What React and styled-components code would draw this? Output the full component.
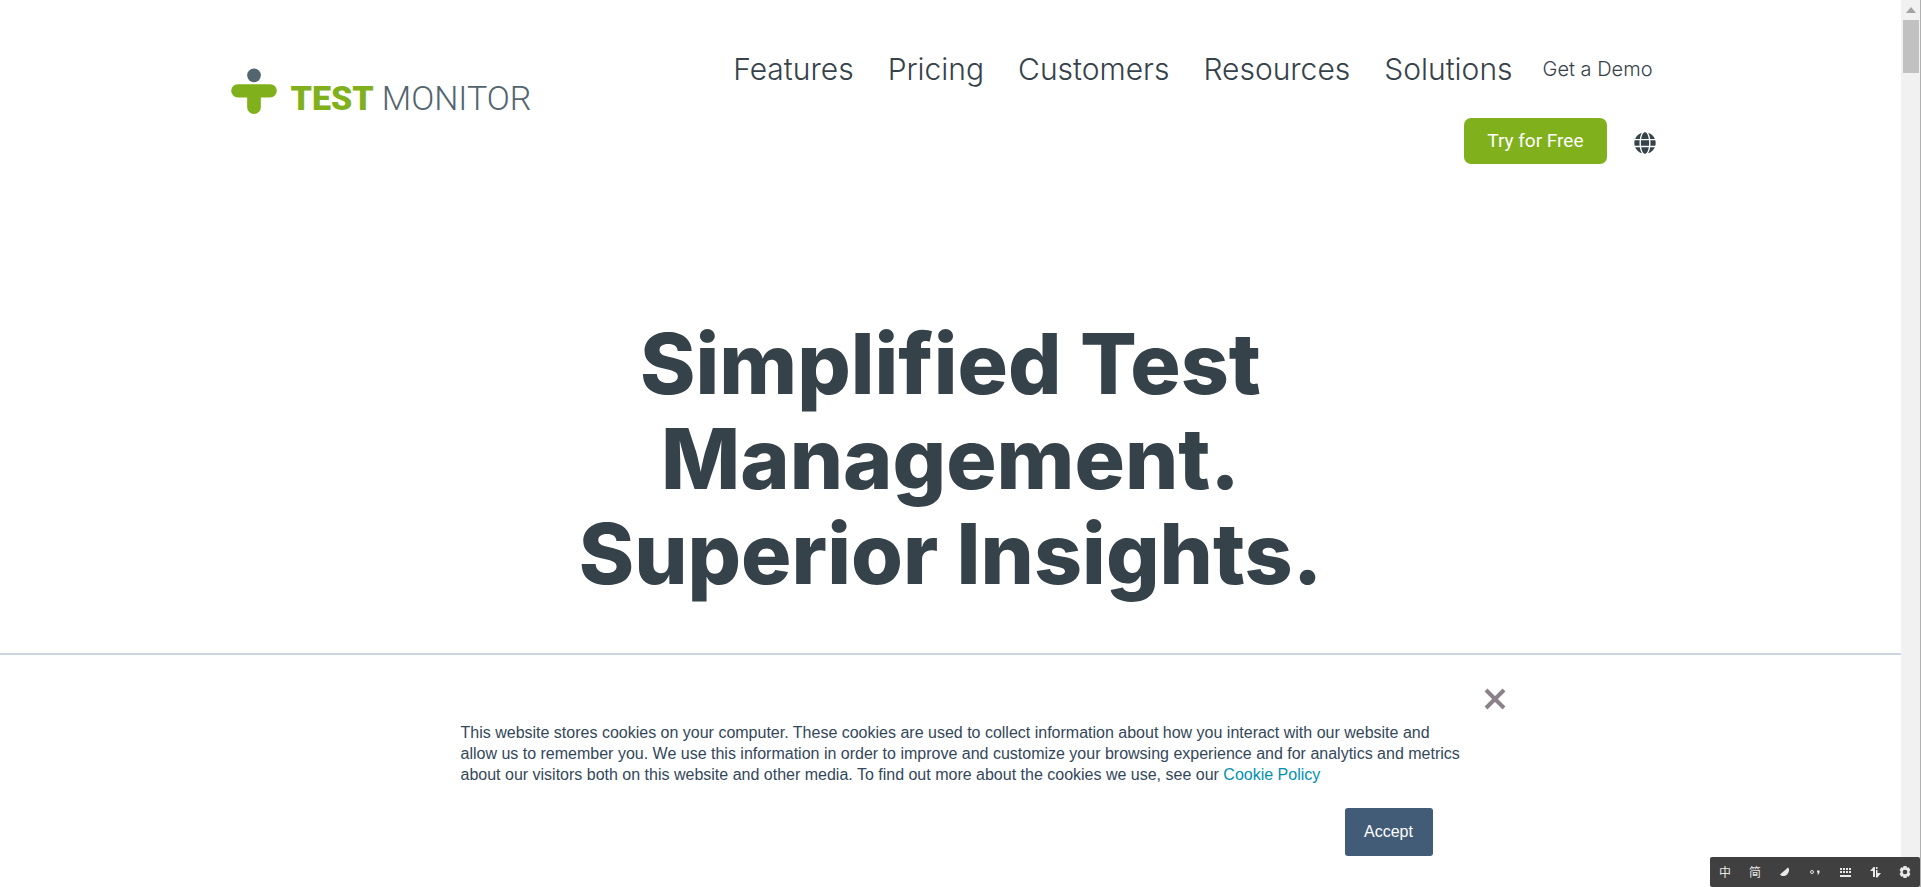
import React from "react";
import styled, { createGlobalStyle } from "styled-components";

const Global = createGlobalStyle`
  *, *::before, *::after { box-sizing: border-box; }
  html, body { margin: 0; background: #fff; }
  body { font-family: Inter, sans-serif; color: #36424a; }
`;

const Frame = styled.div`
  display: grid;
  grid-template-columns: minmax(0, 1fr) 20px;
  min-height: 100vh;
`;

const Page = styled.div`
  display: flex;
  flex-direction: column;
`;

const Header = styled.header`
  display: flex;
  justify-content: space-between;
  width: 100%;
  max-width: 1440px;
  margin: 0 auto;
  padding: 49px 15px 0 0;
`;

const Logo = styled.a`
  display: flex;
  align-items: center;
  gap: 14px;
  height: 48px;
  margin-top: 18px;
  text-decoration: none;
`;

const Wordmark = styled.span`
  display: flex;
  gap: 8px;
  padding-top: 14px;
  font-family: Roboto, sans-serif;
  font-size: 34px;
  line-height: 36px;
  font-weight: 300;
  color: #53656f;
`;

const WordStrong = styled.strong`
  font-weight: 900;
  color: #80b11c;
`;

const Menu = styled.nav`
  display: flex;
  flex-direction: column;
  align-items: flex-end;
  gap: 29px;
`;

const MenuRow = styled.div`
  display: flex;
  align-items: center;
  gap: ${(p) => p.$gap}px;
`;

const MenuLink = styled.a`
  font-size: ${(p) => (p.$small ? 20 : 30)}px;
  padding-right: ${(p) => (p.$small ? 3 : 0)}px;
  line-height: 40px;
  font-weight: 300;
  color: #36424a;
  text-decoration: none;
  white-space: nowrap;
`;

const TrialButton = styled.button`
  height: 46px;
  padding: 0 23px;
  border: 0;
  border-radius: 7px;
  background: #80b11c;
  color: #fff;
  font: 400 19px/46px Roboto, sans-serif;
`;

const LanguageButton = styled.button`
  display: flex;
  padding: 3px 0 0;
  border: 0;
  background: none;
`;

const Hero = styled.main`
  flex: 1;
  padding: 152px 24px 40px;
`;

const Title = styled.h1`
  margin: 0;
  font-size: 84px;
  line-height: 95px;
  font-weight: 800;
  text-align: center;
`;

const Banner = styled.section`
  min-height: 234px;
  padding: 31px 0 24px;
  border-top: 2px solid #cbd6e2;
  background: #fff;
  font-family: "Liberation Sans", Arial, sans-serif;
`;

const BannerInner = styled.div`
  display: flex;
  flex-direction: column;
  align-items: flex-end;
  max-width: 1114px;
  margin: 0 auto;
  padding-left: 67px;
`;

const CloseButton = styled.button`
  display: flex;
  justify-content: center;
  align-items: center;
  width: 26px;
  height: 26px;
  padding: 0;
  border: 0;
  background: none;
`;

const Notice = styled.p`
  align-self: flex-start;
  max-width: 1004px;
  margin: 10px 0 23px;
  font-size: 16px;
  line-height: 21px;
  color: #33475b;
`;

const PolicyLink = styled.a`
  color: #0091ae;
  text-decoration: none;
`;

const AcceptButton = styled.button`
  width: 88px;
  height: 48px;
  margin-right: 75px;
  border: 0;
  border-radius: 3px;
  background: #425b76;
  color: #fff;
  font: 16px "Liberation Sans", Arial, sans-serif;
`;

const Track = styled.div`
  display: flex;
  flex-direction: column;
  align-items: center;
  background: #f1f1f1;
  border-right: 1px solid #b0b0b0;
`;

const Arrow = styled.svg`
  display: block;
  margin: 7px 0;
`;

const Thumb = styled.div`
  width: 16px;
  height: 53px;
  background: #c1c1c1;
`;

const InputBar = styled.div`
  position: fixed;
  right: 1px;
  bottom: 0;
  display: grid;
  grid-template-columns: repeat(7, 30px);
  align-items: center;
  justify-items: center;
  height: 30px;
  border-radius: 2px;
  background: #404040;
  color: #e8e8e8;
  font: 12px/30px "Noto Sans CJK SC", sans-serif;
`;

const links = ["Features", "Pricing", "Customers", "Resources", "Solutions"];

const BarIcon = ({ children }) => (
  <svg width="14" height="14" viewBox="0 0 14 14" fill="#e8e8e8" aria-hidden="true">{children}</svg>
);

export default function App() {
  return (
    <Frame>
      <Global />
      <Page>
        <Header>
          <Logo href="#" aria-label="TestMonitor">
            <svg width="46" height="48" viewBox="0 0 47 48">
              <circle cx="23.5" cy="8" r="7" fill="#53656f" />
              <path d="M7 17h33a6.800 6.800 0 0 1 0 13.600h-9.500v10a7 7 0 0 1-14 0v-10H7a6.800 6.800 0 0 1 0-13.600z" fill="#80b11c" />
            </svg>
            <Wordmark><WordStrong>TEST</WordStrong><span>MONITOR</span></Wordmark>
          </Logo>
          <Menu>
            <MenuRow $gap={30}>
              <MenuRow $gap={34}>
                {links.map((l) => <MenuLink href="#" key={l}>{l}</MenuLink>)}
              </MenuRow>
              <MenuLink href="#" $small>Get a Demo</MenuLink>
            </MenuRow>
            <MenuRow $gap={27}>
              <TrialButton>Try for Free</TrialButton>
              <LanguageButton aria-label="Language">
                <svg width="22" height="22" viewBox="0 0 496 512" fill="#36424a">
                  <path d="M336.500 160C322 70.700 287.800 8 248 8s-74 62.700-88.500 152h177zM152 256c0 22.200 1.200 43.500 3.300 64h185.300c2.100-20.500 3.300-41.800 3.300-64s-1.200-43.500-3.300-64H155.300c-2.100 20.500-3.300 41.800-3.300 64zm324.700-96c-28.600-67.900-86.500-120.400-158-141.600 24.400 33.800 41.200 84.700 50 141.600h108zM177.200 18.400C105.800 39.600 47.800 92.100 19.300 160h108c8.700-56.900 25.500-107.800 49.900-141.600zM487.400 192H372.700c2.100 21 3.300 42.500 3.300 64s-1.200 43-3.300 64h114.600c5.500-20.500 8.600-41.800 8.600-64s-3.100-43.500-8.500-64zM120 256c0-21.500 1.200-43 3.300-64H8.600C3.200 212.500 0 233.800 0 256s3.200 43.500 8.600 64h114.600c-2-21-3.200-42.500-3.200-64zm39.500 96c14.500 89.300 48.700 152 88.500 152s74-62.700 88.500-152h-177zm159.300 141.600c71.400-21.200 129.400-73.700 158-141.600h-108c-8.800 56.900-25.600 107.800-50 141.600zM19.300 352c28.600 67.900 86.500 120.400 158 141.600-24.400-33.800-41.200-84.700-50-141.600h-108z" />
                </svg>
              </LanguageButton>
            </MenuRow>
          </Menu>
        </Header>
        <Hero>
          <Title>Simplified Test<br />Management.<br />Superior Insights.</Title>
        </Hero>
        <Banner aria-label="Cookie notice">
          <BannerInner>
            <CloseButton aria-label="Close">
              <svg width="22" height="22" viewBox="0 0 22 22" stroke="#8b8188" strokeWidth="4"><path d="M2 2l18 18M20 2L2 20" /></svg>
            </CloseButton>
            <Notice>
              This website stores cookies on your computer. These cookies are used to collect information about how you interact with our website and allow us to remember you. We use this information in order to improve and customize your browsing experience and for analytics and metrics about our visitors both on this website and other media. To find out more about the cookies we use, see our <PolicyLink href="#">Cookie Policy</PolicyLink>
            </Notice>
            <AcceptButton>Accept</AcceptButton>
          </BannerInner>
        </Banner>
      </Page>
      <Track>
        <Arrow width="10" height="6" viewBox="0 0 10 6"><path d="M5 0l5 6H0z" fill="#a3a3a3" /></Arrow>
        <Thumb />
      </Track>
      <InputBar>
        <span>中</span>
        <span>简</span>
        <BarIcon><path d="M10 2.500c1.500 1 1.500 4-.5 6.500S4 11.800 2 9.500z" /></BarIcon>
        <BarIcon>
          <circle cx="4" cy="7" r="1.500" fill="none" stroke="#e8e8e8" />
          <path d="M9 5.500h2.500V7.500L10.500 9.500H9.500L10 7.500H9z" />
        </BarIcon>
        <BarIcon>
          <path d="M2 3h2v2H2zM5 3h2v2H5zM8 3h2v2H8zM11 3h2v2h-2zM2 6h2v2H2zM5 6h2v2H5zM8 6h2v2H8zM11 6h2v2h-2zM2 10h11v2H2z" />
        </BarIcon>
        <BarIcon>
          <path d="M2 6l3.500-4H7v10H5V6zM8 2h1.500v2H8zM8 5h1.500v3H13L9.500 12.500H8z" />
        </BarIcon>
        <BarIcon>
          <path fillRule="evenodd" d="M5.500 1h3l.5 1.800 1.800-.5 1.600 2.600L11.200 7l1.200 2.100-1.600 2.600-1.800-.5-.5 1.800h-3L5 11.200l-1.800.5-1.600-2.600L2.800 7 1.600 4.900l1.600-2.600 1.800.5zM7 4.700a2.300 2.300 0 1 0 0 4.600 2.300 2.300 0 0 0 0-4.600z" />
        </BarIcon>
      </InputBar>
    </Frame>
  );
}
